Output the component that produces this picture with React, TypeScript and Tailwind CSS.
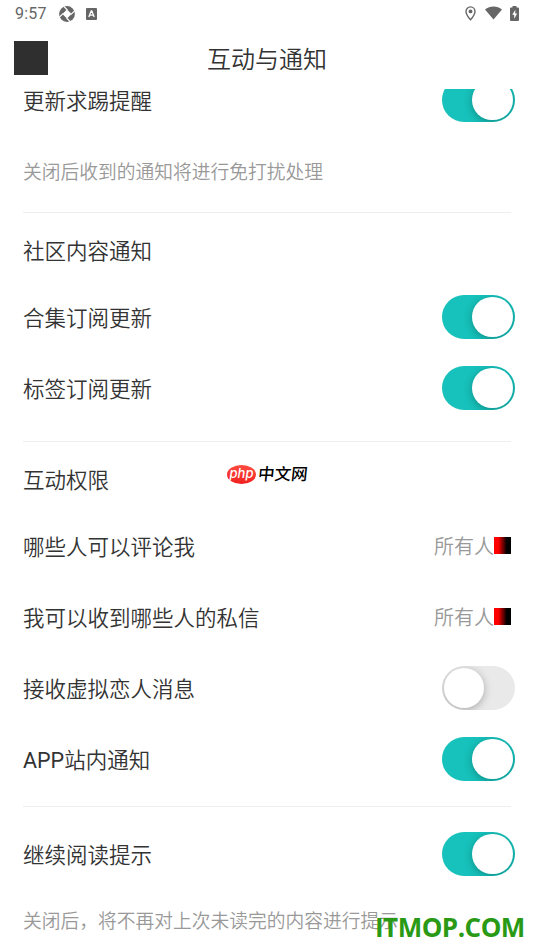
import { useState } from "react";

// Toggle switch, knob on the right when it is on
function Toggle({ defaultOn }: { defaultOn: boolean }) {
  const [on, setOn] = useState<boolean>(defaultOn);

  return (
    <button
      type="button"
      role="switch"
      aria-checked={on}
      onClick={() => setOn(!on)}
      className={`flex items-center w-[72.5px] h-[44px] mb-[1.5px] rounded-full overflow-hidden px-[1.75px] ${
        on ? "justify-end bg-[#16c2bb]" : "justify-start bg-[#e9e9e9]"
      }`}
    >
      <span className="block size-[40.5px] rounded-full bg-white shadow-[0_2px_9px_rgba(0,0,0,0.28)]" />
    </button>
  );
}

function ToggleRow({ label, on = true }: { label: string; on?: boolean }) {
  return (
    <div className="flex justify-between items-center h-[71px] pl-[23px] pr-[19.5px]">
      <span className="pt-[3px] text-[21.5px] text-[#333333]">
        {label.startsWith("APP") ? (
          <>
            <span className="font-normal">APP</span>
            {label.slice(3)}
          </>
        ) : (
          label
        )}
      </span>
      <Toggle defaultOn={on} />
    </div>
  );
}

function SelectRow({ label, value }: { label: string; value: string }) {
  return (
    <div className="flex justify-between items-center h-[71px] pl-[23px] pr-[23px]">
      <span className="pt-[3px] text-[21.5px] text-[#333333]">{label}</span>
      <span className="flex items-center">
        <span className="text-[20px] text-[#999999]">{value}</span>
        <span className="w-[17px] h-[17px] mb-[2px] bg-linear-to-r/srgb from-[#ff0000] from-25% to-black to-75%" />
      </span>
    </div>
  );
}

function SectionTitle({ children }: { children: string }) {
  return (
    <h2 className="flex items-center h-[69px] pt-[9px] pl-[23px] text-[21.5px] text-[#333333]">
      {children}
    </h2>
  );
}

function StatusBar() {
  return (
    <div className="flex justify-between items-center h-[28px] pl-[15px] pr-[15px] text-[#666666]">
      <div className="flex items-center">
        <span className="w-[44px] font-['Roboto'] text-[16px] font-normal tracking-[0.2px]">9:57</span>
        {/* Shutter icon */}
        <svg className="size-[16px]" viewBox="0 0 16 16">
          <circle cx="8" cy="8" r="7.9" fill="#666666" />
          <path d="M8 3.4 12.6 8 8 12.6 3.4 8Z" fill="#fff" />
          <path
            d="M8.4 4 4.8.4M12 8.4l3.6-3.6M7.6 12l3.6 3.6M4 7.6.4 11.2"
            stroke="#fff"
            strokeWidth="1.2"
          />
        </svg>
        <svg className="w-[11px] h-[12px] ml-[11px]" viewBox="0 0 11 12">
          <rect width="11" height="12" rx="1" fill="#666666" />
          <path d="M2.8 9 5.2 3h.6l2.4 6M3.8 7.1h3.4" fill="none" stroke="#fff" strokeWidth="1.3" />
        </svg>
      </div>
      <div className="flex items-center -mt-[2px]">
        <svg className="w-[11px] h-[15px]" viewBox="0 0 11 15">
          <path
            d="M5.5.9A4.5 4.5 0 0 0 1 5.4C1 8.6 5.5 13.7 5.5 13.7S10 8.6 10 5.4A4.5 4.5 0 0 0 5.5.9Z"
            fill="none"
            stroke="#666666"
            strokeWidth="1.4"
          />
          <circle cx="5.5" cy="5.4" r="1.9" fill="#666666" />
        </svg>
        <svg className="w-[17px] h-[14px] ml-[9px]" viewBox="0 0 18 14">
          <path d="M0 3.2C5-.9 13-.9 18 3.2L9 14Z" fill="#666666" />
        </svg>
        <svg className="w-[9px] h-[15px] ml-[8px]" viewBox="0 0 9 15">
          <path
            d="M2.5 0h4v1.5H8a1 1 0 0 1 1 1V14a1 1 0 0 1-1 1H1a1 1 0 0 1-1-1V2.5a1 1 0 0 1 1-1h1.5Z"
            fill="#666666"
          />
          <path d="M5.4 3.8 2.2 8.8h2v4l3-5.2h-2Z" fill="#fff" />
        </svg>
      </div>
    </div>
  );
}

export default function App() {
  return (
    <div className="relative flex flex-col w-full h-screen overflow-hidden bg-white font-['Roboto','Noto_Sans_CJK_SC',sans-serif] font-[350]">
      <StatusBar />

      {/* Header */}
      <header className="grid grid-cols-[34px_1fr_34px] items-center h-[61px] px-[14px]">
        <span className="size-[34px] -mt-px bg-[#2f2f2f]" />
        <h1 className="pt-[2px] text-center text-[24px] text-[#333333]">互动与通知</h1>
      </header>

      {/* Settings list, first row is partly scrolled under the header */}
      <main className="flex-1 overflow-hidden">
        <div className="-mt-[24px]">
          <ToggleRow label="更新求踢提醒" />
          <p className="flex items-center h-[71px] pt-[4px] pl-[23px] text-[18.75px] text-[#999999]">
            关闭后收到的通知将进行免打扰处理
          </p>
          <hr className="mx-[23px] mt-[5px] border-[#eeeeee]" />

          <SectionTitle>社区内容通知</SectionTitle>
          <ToggleRow label="合集订阅更新" />
          <ToggleRow label="标签订阅更新" />
          <hr className="mx-[23px] mt-[17px] border-[#eeeeee]" />

          <SectionTitle>互动权限</SectionTitle>
          <SelectRow label="哪些人可以评论我" value="所有人" />
          <SelectRow label="我可以收到哪些人的私信" value="所有人" />
          <ToggleRow label="接收虚拟恋人消息" on={false} />
          <ToggleRow label="APP站内通知" />
          <hr className="mx-[23px] mt-[11px] mb-[12px] border-[#eeeeee]" />

          <ToggleRow label="继续阅读提示" />
          <p className="flex items-center h-[60px] pt-[5px] pl-[23px] text-[18.75px] text-[#999999]">
            关闭后，将不再对上次未读完的内容进行提示
          </p>
        </div>
      </main>

      {/* Watermarks */}
      <div className="absolute left-[227px] top-[464px] flex items-center h-[20px]">
        <span className="flex justify-center items-center w-[29px] h-[19px] rounded-[50%] bg-linear-to-b from-[#ff4a40] to-[#f01d1d] pb-[2px] font-['Inter'] text-[13px] font-medium italic leading-none text-white">
          php
        </span>
        <span className="ml-[2px] pt-[2px] -skew-x-6 text-[16.5px] font-medium leading-none text-black">中文网</span>
      </div>
      <span className="absolute left-[375px] top-[910px] font-['Open_Sans'] text-[26px] font-bold leading-[34px] tracking-[-0.5px] text-[#2a9a16]">
        ITMOP.COM
      </span>
    </div>
  );
}
